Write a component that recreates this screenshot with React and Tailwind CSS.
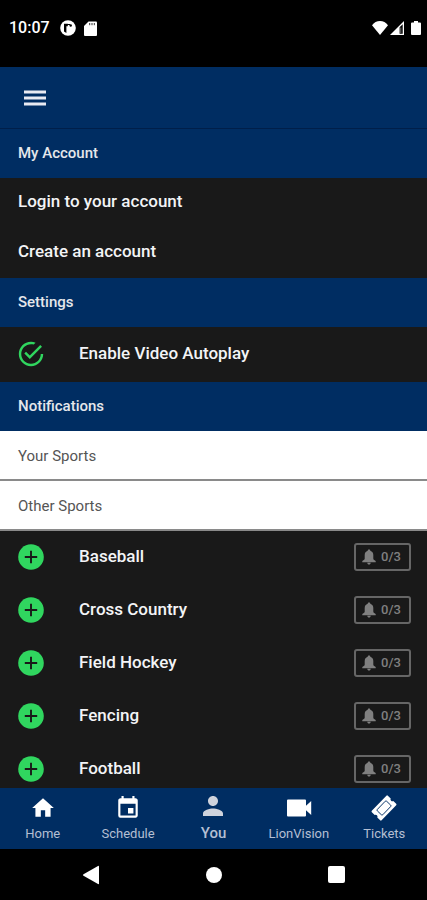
import React, { useState } from 'react';
import { MdHome, MdEvent, MdPerson } from 'react-icons/md';
import { IoMdCheckmarkCircleOutline } from 'react-icons/io';

const sports = ['Baseball', 'Cross Country', 'Field Hockey', 'Fencing', 'Football'];

const TicketIcon = ({ className }) => (
  <svg viewBox="0 0 26 26" className={className} aria-hidden="true">
    <g transform="rotate(-46 13 13)">
      <path
        fill="currentColor"
        d="M2.500 6.200h21a1 1 0 0 1 1 1v4a1.900 1.900 0 0 0 0 3.600v4a1 1 0 0 1-1 1h-21a1 1 0 0 1-1-1v-4a1.900 1.900 0 0 0 0-3.600v-4a1 1 0 0 1 1-1z"
      />
      <rect x="6.300" y="9.200" width="13.400" height="7.600" rx="1" fill="none" stroke="#002d62" strokeWidth="0.900" />
    </g>
  </svg>
);

const VideoIcon = ({ className }) => (
  <svg viewBox="0 0 26 26" className={className} aria-hidden="true">
    <path
      fill="currentColor"
      d="M2 4.500h17a1 1 0 0 1 1 1v5.300L25.200 6v14L20 15.200v5.300a1 1 0 0 1-1 1H2a1 1 0 0 1-1-1v-15a1 1 0 0 1 1-1z"
    />
  </svg>
);

const AddIcon = ({ className }) => (
  <svg viewBox="0 0 26 26" className={className} aria-hidden="true">
    <circle cx="13" cy="13" r="12.800" fill="#30d65f" />
    <path d="M13 6.800v12.400M6.800 13h12.400" stroke="#191919" strokeWidth="1.900" />
  </svg>
);

const BellIcon = ({ className }) => (
  <svg viewBox="0 0 14 16" className={className} aria-hidden="true">
    <path
      fill="currentColor"
      d="M7 .5c.8 0 1.300.5 1.300 1.200 1.900.6 3 2.200 3 4.300v3.500c0 1 .7 1.700 2.400 2.400v1.300H.3v-1.300c1.700-.7 2.400-1.400 2.400-2.400V6c0-2.100 1.100-3.700 3-4.300C5.700 1 6.200.5 7 .5zM5.300 13.700h3.400c0 1.100-.7 1.800-1.700 1.800s-1.700-.7-1.700-1.800z"
    />
  </svg>
);

const tabs = [
  { label: 'Home', icon: MdHome },
  { label: 'Schedule', icon: MdEvent },
  { label: 'You', icon: MdPerson, active: true },
  { label: 'LionVision', icon: VideoIcon },
  { label: 'Tickets', icon: TicketIcon },
];

const StatusBar = () => (
  <div className="flex h-[67px] shrink-0 items-start justify-between bg-black pt-4 pr-1.5 pl-[9px] text-white">
    <div className="flex h-6 items-center">
      <span className="text-base font-medium">10:07</span>
      <svg viewBox="0 0 16 16" className="ml-2.5 h-4 w-4" aria-hidden="true">
        <circle cx="8" cy="8" r="7.800" fill="currentColor" />
        <path d="M4 3.800h3.800v2.400H6.400v6.900L4 11.500z" fill="#000" />
        <path d="M7 4.500h3" stroke="#000" strokeWidth="1" />
        <circle cx="10.700" cy="5.500" r="1.200" fill="#000" />
      </svg>
      <svg viewBox="0 0 13 15" className="ml-2 h-[15px] w-[13px]" aria-hidden="true">
        <path d="M4.500.5H12a1 1 0 0 1 1 1V14a1 1 0 0 1-1 1H1a1 1 0 0 1-1-1V5z" fill="currentColor" />
        <path d="M5.700 2v2.200M8 2v2.200M10.300 2v2.200" stroke="#333" strokeWidth="1" />
      </svg>
    </div>
    <div className="flex h-6 items-center">
      <svg viewBox="0 0 16 14" className="h-3.5 w-4" aria-hidden="true">
        <path d="M8 14 0 4.200C2 1.600 4.800 0 8 0s6 1.600 8 4.200z" fill="currentColor" />
      </svg>
      <svg viewBox="0 0 14 14" className="ml-0.5 h-3.5 w-3.5" aria-hidden="true">
        <path d="M0 14 14 0v14z" fill="currentColor" />
        <path d="M9.600 6.200 12.700 3.200v9.500H9.600z" fill="#000" />
        <path d="M10.800 6.500v5.500" stroke="#777" strokeWidth="1" />
      </svg>
      <svg viewBox="0 0 10 14" className="ml-[7px] h-3.5 w-2.5" aria-hidden="true">
        <path d="M3 0h4v1.400h2a1 1 0 0 1 1 1V13a1 1 0 0 1-1 1H1a1 1 0 0 1-1-1V2.400a1 1 0 0 1 1-1h2z" fill="currentColor" />
      </svg>
    </div>
  </div>
);

const SectionHeader = ({ children }) => (
  <h2 className="flex h-[49px] items-center bg-[#002d62] px-[18px] text-[15px] font-medium text-gray-200">
    {children}
  </h2>
);

const SubHeader = ({ children }) => (
  <h3 className="flex h-[50px] items-center border-b-2 border-[#8a8a8a] bg-white px-[18px] pt-0.5 text-[15px] text-[#555555]">
    {children}
  </h3>
);

const AccountLink = ({ children }) => (
  <a href="#account" className="flex h-[50px] items-center px-[18px] pb-0.5 text-[17px] font-medium">
    {children}
  </a>
);

const SportRow = ({ name }) => (
  <li className="flex h-[53px] items-center pr-4 pb-0.5 pl-[18px]">
    <button type="button" aria-label={`Add ${name}`} className="mr-[35px]">
      <AddIcon className="h-[26px] w-[26px]" />
    </button>
    <span className="flex-1 text-[17px] font-medium">{name}</span>
    <button
      type="button"
      aria-label={`${name} alerts 0/3`}
      className="flex h-7 w-[57px] items-center justify-center gap-[5px] rounded-[3px] border-2 border-[#666666] pr-0.5 text-[13px] font-medium text-[#808080]"
    >
      <BellIcon className="h-4 w-3.5" />
      <span>0/3</span>
    </button>
  </li>
);

const TabBar = () => (
  <nav className="grid h-[61px] shrink-0 grid-cols-5 bg-[#002d62]">
    {tabs.map(({ label, icon: Icon, active }) => (
      <a key={label} href={`#${label}`} className="flex flex-col items-center pt-2">
        <span className={`flex h-6 items-center ${active ? 'pb-1 text-[#cfd3dc]' : 'text-white'}`}>
          <Icon className={active ? 'h-[30px] w-[30px]' : 'h-[26px] w-[26px]'} />
        </span>
        <span className={`leading-[27px] text-[#b4bfd3] ${active ? 'text-[15px] font-medium' : 'text-[13px]'}`}>
          {label}
        </span>
      </a>
    ))}
  </nav>
);

const SystemNav = () => (
  <div className="flex h-[51px] shrink-0 items-center justify-center gap-[106px] bg-black text-white">
    <button type="button" aria-label="Back">
      <svg viewBox="0 0 18 20" className="h-5 w-[18px]">
        <path d="M1.500 9.200 16 .9q1-.4 1 .6v17q0 1-1 .6L1.500 10.800q-1.200-.8 0-1.600z" fill="currentColor" />
      </svg>
    </button>
    <button type="button" aria-label="Home" className="h-4 w-4 rounded-full bg-white" />
    <button type="button" aria-label="Recents" className="h-[17px] w-[17px] rounded-[2px] bg-white" />
  </div>
);

const App = () => {
  const [autoplay, setAutoplay] = useState(true);

  return (
    <div className="flex h-screen flex-col bg-[#191919] font-['Roboto',sans-serif] text-gray-100">
      <StatusBar />
      <header className="flex h-[62px] shrink-0 items-center border-b border-[#001f4a] bg-[#002d62] px-6">
        <button type="button" aria-label="Menu" className="text-[#e8eaf2]">
          <svg viewBox="0 0 22 16" className="h-4 w-[22px]" aria-hidden="true">
            <path d="M0 2h22M0 8h22M0 14h22" stroke="currentColor" strokeWidth="2.800" />
          </svg>
        </button>
      </header>

      <main className="min-h-0 flex-1 overflow-y-auto [scrollbar-width:none]">
        <SectionHeader>My Account</SectionHeader>
        <AccountLink>Login to your account</AccountLink>
        <AccountLink>Create an account</AccountLink>

        <SectionHeader>Settings</SectionHeader>
        <label className="flex h-[55px] items-center px-4 pb-0.5 text-[17px] font-medium">
          <input
            type="checkbox"
            checked={autoplay}
            onChange={(e) => setAutoplay(e.target.checked)}
            className="sr-only"
          />
          <IoMdCheckmarkCircleOutline
            className={`mr-[33px] h-[30px] w-[30px] ${autoplay ? 'text-[#30d65f]' : 'text-gray-600'}`}
          />
          Enable Video Autoplay
        </label>

        <SectionHeader>Notifications</SectionHeader>
        <SubHeader>Your Sports</SubHeader>
        <SubHeader>Other Sports</SubHeader>
        <ul>
          {sports.map((name) => (
            <SportRow key={name} name={name} />
          ))}
        </ul>
      </main>

      <TabBar />
      <SystemNav />
    </div>
  );
};

export default App;
